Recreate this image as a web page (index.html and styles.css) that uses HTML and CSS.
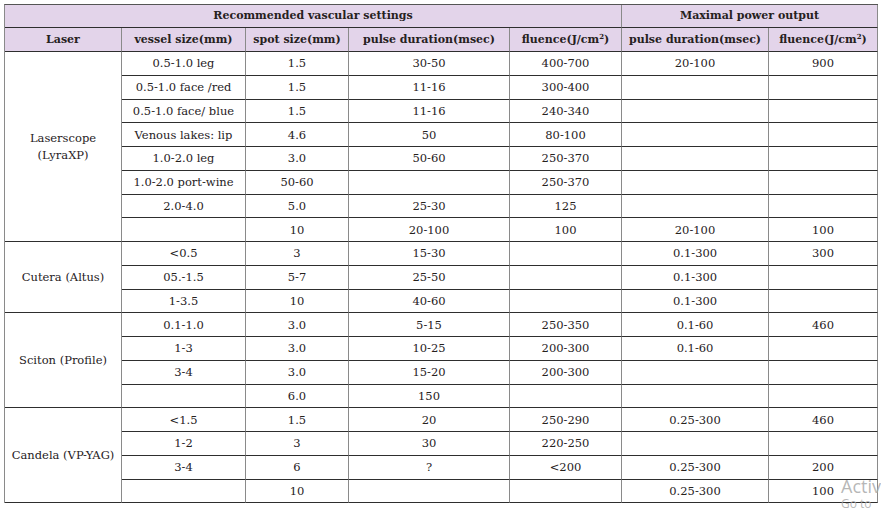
FILE: index.html
```html
<!DOCTYPE html>
<html>
<head>
<meta charset="utf-8">
<link rel="stylesheet" href="styles.css">
</head>
<body>
<table class="grid">
<colgroup>
<col class="c1"><col class="c2"><col class="c3"><col class="c4"><col class="c5"><col class="c6"><col class="c7">
</colgroup>
<thead>
<tr class="h1"><th colspan="5">Recommended vascular settings</th><th colspan="2">Maximal power output</th></tr>
<tr class="h2"><th>Laser</th><th>vessel size(mm)</th><th>spot size(mm)</th><th>pulse duration(msec)</th><th>fluence(J/cm<sup>2</sup>)</th><th>pulse duration(msec)</th><th>fluence(J/cm<sup>2</sup>)</th></tr>
</thead>
<tbody>
<tr><td rowspan="8" class="laser">Laserscope<br>(LyraXP)</td><td>0.5-1.0 leg</td><td>1.5</td><td>30-50</td><td>400-700</td><td>20-100</td><td>900</td></tr>
<tr><td>0.5-1.0 face /red</td><td>1.5</td><td>11-16</td><td>300-400</td><td></td><td></td></tr>
<tr><td>0.5-1.0 face/ blue</td><td>1.5</td><td>11-16</td><td>240-340</td><td></td><td></td></tr>
<tr><td>Venous lakes: lip</td><td>4.6</td><td>50</td><td>80-100</td><td></td><td></td></tr>
<tr><td>1.0-2.0 leg</td><td>3.0</td><td>50-60</td><td>250-370</td><td></td><td></td></tr>
<tr><td>1.0-2.0 port-wine</td><td>50-60</td><td></td><td>250-370</td><td></td><td></td></tr>
<tr><td>2.0-4.0</td><td>5.0</td><td>25-30</td><td>125</td><td></td><td></td></tr>
<tr><td></td><td>10</td><td>20-100</td><td>100</td><td>20-100</td><td>100</td></tr>

<tr><td rowspan="3" class="laser">Cutera (Altus)</td><td>&lt;0.5</td><td>3</td><td>15-30</td><td></td><td>0.1-300</td><td>300</td></tr>
<tr><td>05.-1.5</td><td>5-7</td><td>25-50</td><td></td><td>0.1-300</td><td></td></tr>
<tr><td>1-3.5</td><td>10</td><td>40-60</td><td></td><td>0.1-300</td><td></td></tr>

<tr><td rowspan="4" class="laser">Sciton (Profile)</td><td>0.1-1.0</td><td>3.0</td><td>5-15</td><td>250-350</td><td>0.1-60</td><td>460</td></tr>
<tr><td>1-3</td><td>3.0</td><td>10-25</td><td>200-300</td><td>0.1-60</td><td></td></tr>
<tr><td>3-4</td><td>3.0</td><td>15-20</td><td>200-300</td><td></td><td></td></tr>
<tr><td></td><td>6.0</td><td>150</td><td></td><td></td><td></td></tr>

<tr><td rowspan="4" class="laser">Candela (VP-YAG)</td><td>&lt;1.5</td><td>1.5</td><td>20</td><td>250-290</td><td>0.25-300</td><td>460</td></tr>
<tr><td>1-2</td><td>3</td><td>30</td><td>220-250</td><td></td><td></td></tr>
<tr><td>3-4</td><td>6</td><td>?</td><td>&lt;200</td><td>0.25-300</td><td>200</td></tr>
<tr><td></td><td>10</td><td></td><td></td><td>0.25-300</td><td>100</td></tr>
</tbody>
</table>
<div class="watermark"><span class="wm1">Activ</span><span class="wm2">Go to</span></div>
</body>
</html>
```
FILE: styles.css
```css
html, body {
  margin: 0;
  padding: 0;
  background: #ffffff;
  overflow: hidden;
  width: 881px;
  height: 508px;
}
body {
  position: relative;
  padding: 4px 0 0 4px;
  box-sizing: border-box;
  font-family: "DejaVu Serif", serif;
  color: #26211d;
}
.grid {
  table-layout: fixed;
  border-collapse: separate;
  border-spacing: 0;
  width: 873px;
  border-left: 1px solid #8a8a8a;
  border-top: 1px solid #555;
  font-size: 11.5px;
}
.c1 { width: 117px; }
.c2 { width: 124px; }
.c3 { width: 103px; }
.c4 { width: 161px; }
.c5 { width: 112px; }
.c6 { width: 147px; }
.c7 { width: 109px; }
th, td {
  padding: 0;
  text-align: center;
  vertical-align: middle;
  border-right: 1px solid #8a8a8a;
  border-bottom: 1px solid #2e2e2e;
  white-space: nowrap;
  line-height: 14px;
}
th {
  background: #e3d4ea;
  font-weight: bold;
  font-size: 11px;
}
.h1 th { height: 22px; }
.h2 th { height: 23px; }
td { height: 22.75px; }
.laser { line-height: 17px; }
sup {
  font-size: 7px;
  line-height: 0;
  vertical-align: 4px;
}
.watermark {
  position: absolute;
  left: 841px;
  top: 475px;
  display: flex;
  flex-direction: column;
  white-space: nowrap;
  font-family: "Open Sans", sans-serif;
  color: rgba(170,170,170,0.85);
}
.wm1 { font-size: 18px; line-height: 22px; }
.wm2 { font-size: 12px; line-height: 14px; }
```
